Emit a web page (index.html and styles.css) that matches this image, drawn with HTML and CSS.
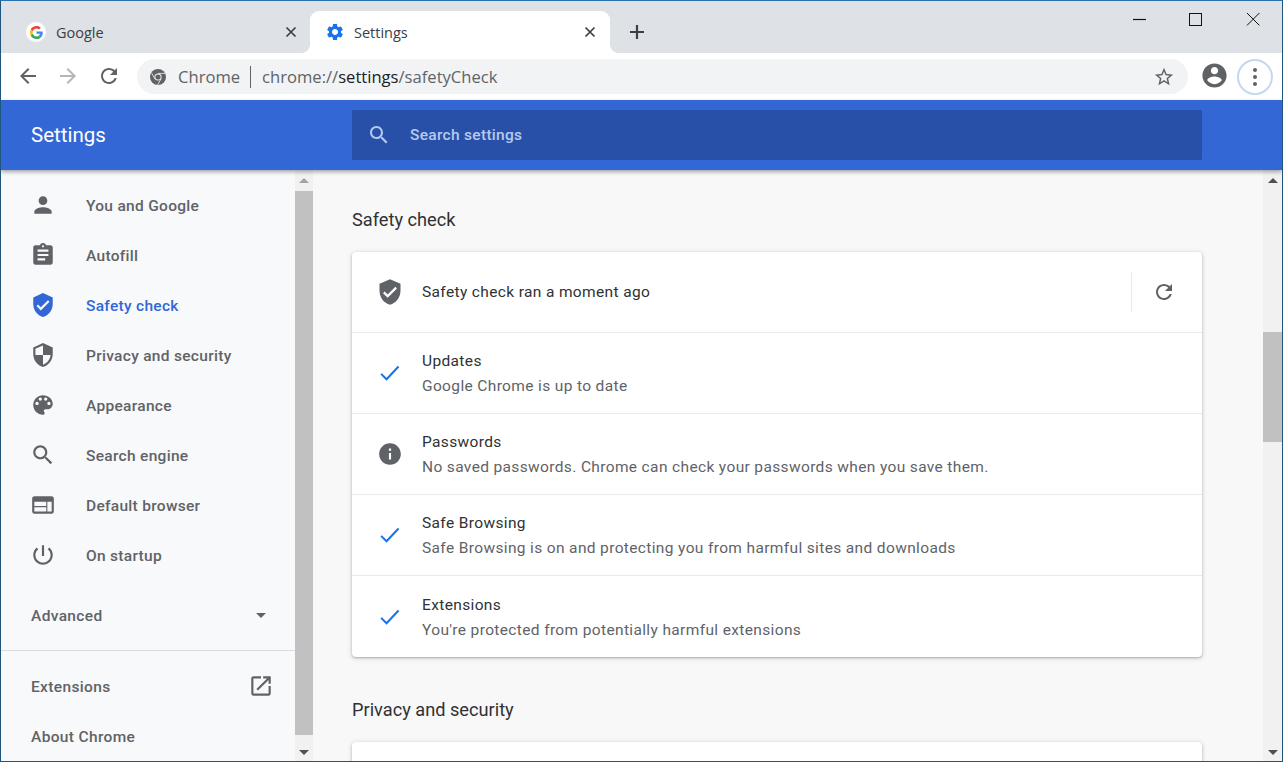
FILE: index.html
```html
<!DOCTYPE html>
<html lang="en">
<head>
<meta charset="utf-8">
<title>Settings</title>
<link rel="stylesheet" href="styles.css">
</head>
<body>
<div class="window">
  <div class="tabstrip">
    <div class="tab">
      <span class="favicon-g"><svg viewBox="0 0 48 48" width="13" height="13"><path fill="#EA4335" d="M24 9.5c3.54 0 6.71 1.22 9.21 3.6l6.85-6.85C35.9 2.38 30.47 0 24 0 14.62 0 6.51 5.38 2.56 13.22l7.98 6.19C12.43 13.72 17.74 9.5 24 9.5z"/><path fill="#4285F4" d="M46.98 24.55c0-1.57-.15-3.09-.38-4.55H24v9.02h12.94c-.58 2.96-2.26 5.48-4.78 7.18l7.73 6c4.51-4.18 7.09-10.36 7.09-17.65z"/><path fill="#FBBC05" d="M10.53 28.59c-.48-1.45-.76-2.99-.76-4.59s.27-3.14.76-4.59l-7.98-6.19C.92 16.46 0 20.12 0 24c0 3.88.92 7.54 2.56 10.78l7.97-6.19z"/><path fill="#34A853" d="M24 48c6.48 0 11.93-2.13 15.89-5.81l-7.73-6c-2.15 1.45-4.92 2.3-8.16 2.3-6.26 0-11.57-4.22-13.47-9.91l-7.98 6.19C6.51 42.62 14.62 48 24 48z"/></svg></span>
      <span class="tab-title">Google</span>
      <svg class="tab-close" viewBox="0 0 12 12" width="12" height="12"><path d="M1.5 1.5l9 9M10.5 1.5l-9 9" stroke="#3c4043" stroke-width="1.7" fill="none"/></svg>
    </div>
    <div class="tab tab-active">
      <svg class="favicon" viewBox="0 0 24 24" width="20" height="20"><path fill="#1a73e8" d="M19.14 12.94c.04-.3.06-.61.06-.94 0-.32-.02-.64-.07-.94l2.03-1.58c.18-.14.23-.41.12-.61l-1.92-3.32c-.12-.22-.37-.29-.59-.22l-2.39.96c-.5-.38-1.03-.7-1.62-.94l-.36-2.54c-.04-.24-.24-.41-.48-.41h-3.84c-.24 0-.43.17-.47.41l-.36 2.54c-.59.24-1.13.57-1.62.94l-2.39-.96c-.22-.08-.47 0-.59.22L2.74 8.87c-.12.21-.08.47.12.61l2.03 1.58c-.05.3-.09.63-.09.94s.02.64.07.94l-2.03 1.58c-.18.14-.23.41-.12.61l1.92 3.32c.12.22.37.29.59.22l2.39-.96c.5.38 1.03.7 1.62.94l.36 2.54c.05.24.24.41.48.41h3.84c.24 0 .44-.17.47-.41l.36-2.54c.59-.24 1.13-.56 1.62-.94l2.39.96c.22.08.47 0 .59-.22l1.92-3.32c.12-.22.07-.47-.12-.61l-2.01-1.58zM12 15.6c-1.98 0-3.6-1.62-3.6-3.6s1.62-3.6 3.6-3.6 3.6 1.62 3.6 3.6-1.62 3.6-3.6 3.6z"/></svg>
      <span class="tab-title">Settings</span>
      <svg class="tab-close" viewBox="0 0 12 12" width="12" height="12"><path d="M1.5 1.5l9 9M10.5 1.5l-9 9" stroke="#3c4043" stroke-width="1.7" fill="none"/></svg>
    </div>
    <svg class="new-tab" viewBox="0 0 16 16" width="16" height="16"><path d="M8 1v14M1 8h14" stroke="#3c4043" stroke-width="2.2" fill="none"/></svg>
    <div class="win-controls">
      <svg viewBox="0 0 14 14" width="14" height="14"><path d="M3 6.5h13" stroke="#111" stroke-width="1.2" fill="none"/></svg>
      <svg viewBox="0 0 14 14" width="14" height="14"><rect x="1.5" y=".5" width="12" height="12" stroke="#111" stroke-width="1" fill="none"/></svg>
      <svg viewBox="0 0 14 14" width="14" height="14"><path d="M1 0l12.4 12.4M13.4 0L1 12.4" stroke="#111" stroke-width="1" fill="none"/></svg>
    </div>
  </div>

  <div class="toolbar">
    <svg class="nav-icon" viewBox="0 0 24 24" width="24" height="24"><path fill="#5f6368" d="M20 11H7.83l5.59-5.59L12 4l-8 8 8 8 1.41-1.41L7.83 13H20v-2z"/></svg>
    <svg class="nav-icon" viewBox="0 0 24 24" width="24" height="24"><path fill="#b4b6b9" d="M4 11h12.17l-5.59-5.59L12 4l8 8-8 8-1.41-1.41L16.17 13H4v-2z"/></svg>
    <svg class="nav-icon" viewBox="0 0 24 24" width="24" height="24"><path fill="#5f6368" d="M17.65 6.35C16.2 4.9 14.21 4 12 4c-4.42 0-7.99 3.58-7.99 8s3.57 8 7.99 8c3.73 0 6.84-2.55 7.73-6h-2.08c-.82 2.33-3.04 4-5.65 4-3.31 0-6-2.69-6-6s2.69-6 6-6c1.66 0 3.14.69 4.22 1.78L13 11h7V4l-2.35 2.35z"/></svg>
    <div class="omnibox">
      <svg class="chrome-icon" viewBox="0 0 16 16" width="16" height="16"><circle cx="8" cy="8" r="8" fill="#5f6368"/><circle cx="8" cy="8" r="3.6" fill="#f1f3f4"/><circle cx="8" cy="8" r="2.6" fill="#5f6368"/><path d="M8 4.4h7M5 10l-3.4-6M11 10l-3.5 6" stroke="#f1f3f4" stroke-width=".8" fill="none"/></svg>
      <span class="chip">Chrome</span>
      <span class="chip-sep"></span>
      <span class="url">chrome://<span class="url-host">settings</span>/safetyCheck</span>
      <svg class="star" viewBox="0 0 24 24" width="22" height="22"><path fill="#5f6368" d="M22 9.24l-7.19-.62L12 2 9.19 8.63 2 9.24l5.46 4.73L5.82 21 12 17.27 18.18 21l-1.63-7.03L22 9.24zM12 15.4l-3.76 2.27 1-4.28-3.32-2.88 4.38-.38L12 6.1l1.71 4.04 4.38.38-3.32 2.88 1 4.28L12 15.4z"/></svg>
    </div>
    <svg class="avatar" viewBox="0 0 24 24" width="29" height="29"><path fill="#5f6368" d="M12 2C6.48 2 2 6.48 2 12s4.48 10 10 10 10-4.48 10-10S17.52 2 12 2zm0 3c1.66 0 3 1.34 3 3s-1.34 3-3 3-3-1.34-3-3 1.34-3 3-3zm0 14.2c-2.5 0-4.71-1.28-6-3.22.03-1.99 4-3.08 6-3.08 1.99 0 5.97 1.09 6 3.08-1.29 1.94-3.5 3.22-6 3.22z"/></svg>
    <div class="menu-btn"><i></i><i></i><i></i></div>
  </div>

  <header class="app-header">
    <div class="app-title">Settings</div>
    <div class="searchbox">
      <svg viewBox="0 0 24 24" width="24" height="24"><path fill="#b8c9ee" d="M15.5 14h-.79l-.28-.27C15.41 12.59 16 11.11 16 9.5 16 5.91 13.09 3 9.5 3S3 5.91 3 9.5 5.91 16 9.5 16c1.61 0 3.09-.59 4.23-1.57l.27.28v.79l5 4.99L20.49 19l-4.99-5zm-6 0C7.01 14 5 11.99 5 9.5S7.01 5 9.5 5 14 7.01 14 9.5 11.99 14 9.5 14z"/></svg>
      <span>Search settings</span>
    </div>
  </header>

  <div class="content">
    <nav class="sidebar">
      <div class="side-scroll">
        <ul class="menu">
          <li><svg viewBox="0 0 24 24" width="26" height="26"><path d="M12 12c2.21 0 4-1.79 4-4s-1.79-4-4-4-4 1.79-4 4 1.79 4 4 4zm0 2c-2.67 0-8 1.34-8 4v2h16v-2c0-2.66-5.33-4-8-4z"/></svg><span>You and Google</span></li>
          <li><svg viewBox="0 0 24 24" width="26" height="26"><path d="M19 3h-4.18C14.4 1.84 13.3 1 12 1c-1.3 0-2.4.84-2.82 2H5c-1.1 0-2 .9-2 2v14c0 1.1.9 2 2 2h14c1.1 0 2-.9 2-2V5c0-1.1-.9-2-2-2zm-7 0c.55 0 1 .45 1 1s-.45 1-1 1-1-.45-1-1 .45-1 1-1zm2 14H7v-2h7v2zm3-4H7v-2h10v2zm0-4H7V7h10v2z"/></svg><span>Autofill</span></li>
          <li class="active"><svg viewBox="0 0 24 24" width="26" height="26"><path d="M12 1L3 5v6c0 5.55 3.84 10.74 9 12 5.16-1.26 9-6.45 9-12V5l-9-4zm-2 16l-4-4 1.41-1.41L10 14.17l6.59-6.59L18 9l-8 8z"/></svg><span>Safety check</span></li>
          <li><svg viewBox="0 0 24 24" width="26" height="26"><path d="M12 1L3 5v6c0 5.55 3.84 10.74 9 12 5.16-1.26 9-6.45 9-12V5l-9-4zm0 10.99h7c-.53 4.12-3.28 7.79-7 8.94V12H5V6.3l7-3.11v8.8z"/></svg><span>Privacy and security</span></li>
          <li><svg viewBox="0 0 24 24" width="26" height="26"><path d="M12 3c-4.97 0-9 4.03-9 9s4.03 9 9 9c.83 0 1.5-.67 1.5-1.5 0-.39-.15-.74-.39-1.01-.23-.26-.38-.61-.38-.99 0-.83.67-1.5 1.5-1.5H16c2.76 0 5-2.24 5-5 0-4.42-4.03-8-9-8zm-5.5 9c-.83 0-1.5-.67-1.5-1.5S5.67 9 6.5 9 8 9.67 8 10.5 7.33 12 6.5 12zm3-4C8.67 8 8 7.33 8 6.5S8.67 5 9.5 5s1.5.67 1.5 1.5S10.33 8 9.5 8zm5 0c-.83 0-1.5-.67-1.5-1.5S13.67 5 14.5 5s1.5.67 1.5 1.5S15.33 8 14.5 8zm3 4c-.83 0-1.5-.67-1.5-1.5S16.67 9 17.5 9s1.5.67 1.5 1.5-.67 1.5-1.5 1.5z"/></svg><span>Appearance</span></li>
          <li><svg viewBox="0 0 24 24" width="26" height="26"><path d="M15.5 14h-.79l-.28-.27C15.41 12.59 16 11.11 16 9.5 16 5.91 13.09 3 9.5 3S3 5.91 3 9.5 5.91 16 9.5 16c1.61 0 3.09-.59 4.23-1.57l.27.28v.79l5 4.99L20.49 19l-4.99-5zm-6 0C7.01 14 5 11.99 5 9.5S7.01 5 9.5 5 14 7.01 14 9.5 11.99 14 9.5 14z"/></svg><span>Search engine</span></li>
          <li><svg viewBox="0 0 24 24" width="26" height="26"><path d="M20 4H4c-1.1 0-2 .9-2 2v12c0 1.1.9 2 2 2h16c1.1 0 2-.9 2-2V6c0-1.1-.9-2-2-2zm-5 14H4v-4h11v4zm0-5H4V9h11v4zm5 5h-4V9h4v9z"/></svg><span>Default browser</span></li>
          <li><svg viewBox="0 0 24 24" width="26" height="26"><path d="M13 3h-2v10h2V3zm4.83 2.17l-1.42 1.42C17.99 7.86 19 9.81 19 12c0 3.87-3.13 7-7 7s-7-3.13-7-7c0-2.19 1.01-4.14 2.58-5.42L6.17 5.17C4.23 6.82 3 9.26 3 12c0 4.97 4.03 9 9 9s9-4.03 9-9c0-2.74-1.23-5.18-3.17-6.83z"/></svg><span>On startup</span></li>
        </ul>
        <div class="advanced"><span>Advanced</span><i class="caret"></i></div>
        <div class="side-footer">
          <div class="foot-row"><span>Extensions</span><svg viewBox="0 0 24 24" width="26" height="26"><path d="M19 19H5V5h7V3H5c-1.11 0-2 .9-2 2v14c0 1.1.89 2 2 2h14c1.1 0 2-.9 2-2v-7h-2v7zM14 3v2h3.59l-9.83 9.83 1.41 1.41L19 6.41V10h2V3h-7z"/></svg></div>
          <div class="foot-row"><span>About Chrome</span></div>
        </div>
      </div>
      <div class="scrollbar side-bar">
        <i class="arrow up"></i>
        <div class="track"><div class="thumb"></div></div>
        <i class="arrow down"></i>
      </div>
    </nav>

    <main class="main">
      <div class="main-scroll">
        <h2 class="section-title">Safety check</h2>
        <section class="card">
          <div class="row row-head">
            <svg class="row-icon head-icon" viewBox="0 0 24 24" width="28" height="28"><path fill="#5f6368" d="M12 1L3 5v6c0 5.55 3.84 10.74 9 12 5.16-1.26 9-6.45 9-12V5l-9-4zm-2 16l-4-4 1.41-1.41L10 14.17l6.59-6.59L18 9l-8 8z"/></svg>
            <div class="row-text"><div class="row-title">Safety check ran a moment ago</div></div>
            <div class="row-action">
              <svg viewBox="0 0 24 24" width="24" height="24"><path fill="#5f6368" d="M17.65 6.35C16.2 4.9 14.21 4 12 4c-4.42 0-7.99 3.58-7.99 8s3.57 8 7.99 8c3.73 0 6.84-2.55 7.73-6h-2.08c-.82 2.33-3.04 4-5.65 4-3.31 0-6-2.69-6-6s2.69-6 6-6c1.66 0 3.14.69 4.22 1.78L13 11h7V4l-2.35 2.35z"/></svg>
            </div>
          </div>
          <div class="row">
            <svg class="row-icon" viewBox="0 0 24 24" width="26" height="26"><path fill="none" stroke="#1a73e8" stroke-width="1.9" d="M3.8 12.8l5 5L19.9 6"/></svg>
            <div class="row-text"><div class="row-title">Updates</div><div class="row-sub">Google Chrome is up to date</div></div>
          </div>
          <div class="row">
            <svg class="row-icon" viewBox="0 0 24 24" width="26" height="26"><path fill="#5f6368" d="M12 2C6.48 2 2 6.48 2 12s4.48 10 10 10 10-4.48 10-10S17.52 2 12 2zm1 15h-2v-6h2v6zm0-8h-2V7h2v2z"/></svg>
            <div class="row-text"><div class="row-title">Passwords</div><div class="row-sub">No saved passwords. Chrome can check your passwords when you save them.</div></div>
          </div>
          <div class="row">
            <svg class="row-icon" viewBox="0 0 24 24" width="26" height="26"><path fill="none" stroke="#1a73e8" stroke-width="1.9" d="M3.8 12.8l5 5L19.9 6"/></svg>
            <div class="row-text"><div class="row-title">Safe Browsing</div><div class="row-sub">Safe Browsing is on and protecting you from harmful sites and downloads</div></div>
          </div>
          <div class="row row-last">
            <svg class="row-icon" viewBox="0 0 24 24" width="26" height="26"><path fill="none" stroke="#1a73e8" stroke-width="1.9" d="M3.8 12.8l5 5L19.9 6"/></svg>
            <div class="row-text"><div class="row-title">Extensions</div><div class="row-sub">You're protected from potentially harmful extensions</div></div>
          </div>
        </section>
        <h2 class="section-title section-next">Privacy and security</h2>
        <section class="card card-tail"></section>
      </div>
      <div class="scrollbar main-bar">
        <i class="arrow up"></i>
        <div class="track"><div class="thumb"></div></div>
        <i class="arrow down"></i>
      </div>
    </main>
  </div>
</div>
</body>
</html>
```
FILE: styles.css
```css
* { box-sizing: border-box; }
html, body { margin: 0; padding: 0; height: 100%; overflow: hidden; }
body { font-family: Roboto, "Liberation Sans", sans-serif; background: #fff; }
.window {
  width: 1283px; height: 762px; display: flex; flex-direction: column;
  border: 1px solid #1f5680; border-top-color: #2a72ad; overflow: hidden;
}

/* tab strip */
.tabstrip { height: 52px; flex: none; background: #dee1e6; display: flex; align-items: flex-end; }
.tab { width: 309px; height: 42px; display: flex; align-items: center; padding: 0 13px 0 25px; font-family: "Open Sans", sans-serif; color: #3c4043; position: relative; }
.tab-active { width: 300px; background: #fff; border-radius: 9px 9px 0 0; padding: 0 14px 0 15px; }
.tab-active::before, .tab-active::after { content: ""; position: absolute; bottom: 0; width: 8px; height: 8px; }
.tab-active::before { left: -8px; background: radial-gradient(circle at 0 0, #dee1e6 7.5px, #fff 8px); }
.tab-active::after { right: -8px; background: radial-gradient(circle at 100% 0, #dee1e6 7.5px, #fff 8px); }
.favicon-g { width: 20px; height: 20px; border-radius: 50%; background: #fff; display: flex; align-items: center; justify-content: center; flex: none; }
.favicon { flex: none; }
.tab-title { margin-left: 10px; flex: 1; font-size: 14.5px; }
.tab-active .tab-title { margin-left: 9px; }
.tab-close { flex: none; }
.new-tab { margin: 0 0 13px 19px; flex: none; }
.win-controls { margin-left: auto; align-self: flex-start; display: flex; gap: 44px; padding: 12px 22px 0 0; }
.win-controls svg { display: block; overflow: visible; }

/* toolbar */
.toolbar { height: 47px; flex: none; background: #fff; display: flex; align-items: center; padding: 0 0 2px 15px; }
.nav-icon { flex: none; margin-right: 16px; }
.nav-icon:nth-child(3) { margin-left: 1px; margin-right: 16px; }
.omnibox { width: 1051px; height: 35px; margin-top: 2px; border-radius: 18px; background: #f1f3f4; display: flex; align-items: center; padding: 0 13px 0 13px; font: 16.6px "Open Sans", sans-serif; color: #5f6368; }
.chip { margin: 0 0 1px 12px; }
.url { margin-bottom: 1px; }
.chip-sep { width: 1px; height: 22px; background: #5f6368; margin: 0 11px 0 10px; }
.url-host { color: #202124; }
.star { margin-left: auto; }
.avatar { margin-left: 12px; flex: none; }
.menu-btn { width: 36px; height: 36px; margin: 2px 0 0 8px; border-radius: 50%; border: 2px solid #c4d7f2; display: flex; flex-direction: column; align-items: center; justify-content: center; gap: 3px; flex: none; }
.menu-btn i { width: 4px; height: 4px; border-radius: 50%; background: #5f6368; }

/* header */
.app-header { height: 70px; flex: none; background: #3367d6; display: flex; align-items: center; box-shadow: 0 2px 4px rgba(60,64,67,.45); position: relative; z-index: 2; }
.app-title { width: 351px; padding-left: 30px; color: #fff; font-size: 20.5px; }
.searchbox { width: 850px; height: 50px; background: #2850a8; border-radius: 1px; display: flex; align-items: center; padding-left: 15px; color: #b8c9ee; font-size: 15.5px; font-weight: 500; letter-spacing: .3px; }
.searchbox span { margin-left: 19px; }

/* layout */
.content { flex: 1; display: flex; min-height: 0; background: #f8f9fa; }
.sidebar { width: 312px; flex: none; display: flex; }
.side-scroll { width: 294px; flex: none; overflow: hidden; padding-top: 10px; }
.main { flex: 1; display: flex; min-width: 0; background: #f8f8f8; }
.main-scroll { flex: 1; overflow: hidden; padding: 0 0 0 39px; }

/* scrollbars */
.scrollbar { width: 18px; flex: none; background: #f1f1f1; display: flex; flex-direction: column; align-items: center; }
.main-bar { width: 19px; }
.arrow { width: 0; height: 0; flex: none; border-left: 5px solid transparent; border-right: 5px solid transparent; margin: 8px 0 5px; }
.arrow.up { border-bottom: 5px solid #a3a3a3; }
.arrow.down { border-top: 5px solid #505050; margin: 5px 0 6px; }
.main-bar .arrow.up { border-bottom-color: #505050; }
.track { flex: 1; width: 100%; }
.thumb { background: #c1c1c1; width: 100%; }
.side-bar .thumb { height: 544px; margin-top: 3px; }
.main-bar .thumb { height: 110px; margin-top: 144px; }

/* sidebar menu */
.menu { list-style: none; margin: 0; padding: 0; }
.menu li { height: 50px; display: flex; align-items: center; padding-left: 29px; font-size: 15.5px; font-weight: 500; letter-spacing: .3px; color: #5f6368; }
.menu svg { margin-right: 30px; fill: #5f6368; flex: none; }
.menu li span { margin-top: 1px; }
.menu li.active { color: #3367d6; }
.menu li.active svg { fill: #3367d6; }
.advanced { height: 70px; display: flex; align-items: center; justify-content: space-between; padding: 0 29px 0 30px; font-size: 15.5px; font-weight: 500; letter-spacing: .35px; color: #5f6368; }
.advanced span, .foot-row span { margin-top: 2px; }
.caret { width: 0; height: 0; border-left: 5px solid transparent; border-right: 5px solid transparent; border-top: 5px solid #5f6368; }
.side-footer { border-top: 1px solid #dadce0; padding-top: 10px; }
.foot-row { height: 50px; display: flex; align-items: center; justify-content: space-between; padding: 0 21px 0 30px; font-size: 15.5px; font-weight: 500; letter-spacing: .35px; color: #5f6368; }
.foot-row svg { fill: #5f6368; }

/* main */
.section-title { margin: 0; font-size: 18.2px; font-weight: 400; color: #303134; line-height: 24px; padding-top: 38px; height: 82px; }
.section-next { padding-top: 41px; height: 85px; }
.card { width: 850px; background: #fff; border-radius: 4px; box-shadow: 0 1px 2px rgba(60,64,67,.3), 0 1px 4px 1px rgba(60,64,67,.15); }
.card-tail { height: 60px; }
.row { height: 81px; display: flex; align-items: center; padding-left: 25px; border-top: 1px solid #e8eaed; }
.row-head { border-top: 0; height: 80px; }
.row-last { height: 82px; }
.row-icon { flex: none; margin-right: 19px; }
.head-icon { margin-left: -1px; margin-right: 18px; }
.row-text { flex: 1; min-width: 0; margin-top: 2px; }
.row-last .row-text { margin-top: 3px; }
.row-head .row-text { margin-top: 0; }
.row-title { font-size: 15.5px; line-height: 25px; color: #303134; letter-spacing: .36px; }
.row-sub { font-size: 15.5px; line-height: 25px; color: #5f6368; letter-spacing: .36px; }
.row-action { width: 71px; height: 40px; border-left: 1px solid #e8eaed; display: flex; align-items: center; padding-left: 20px; flex: none; }
```
